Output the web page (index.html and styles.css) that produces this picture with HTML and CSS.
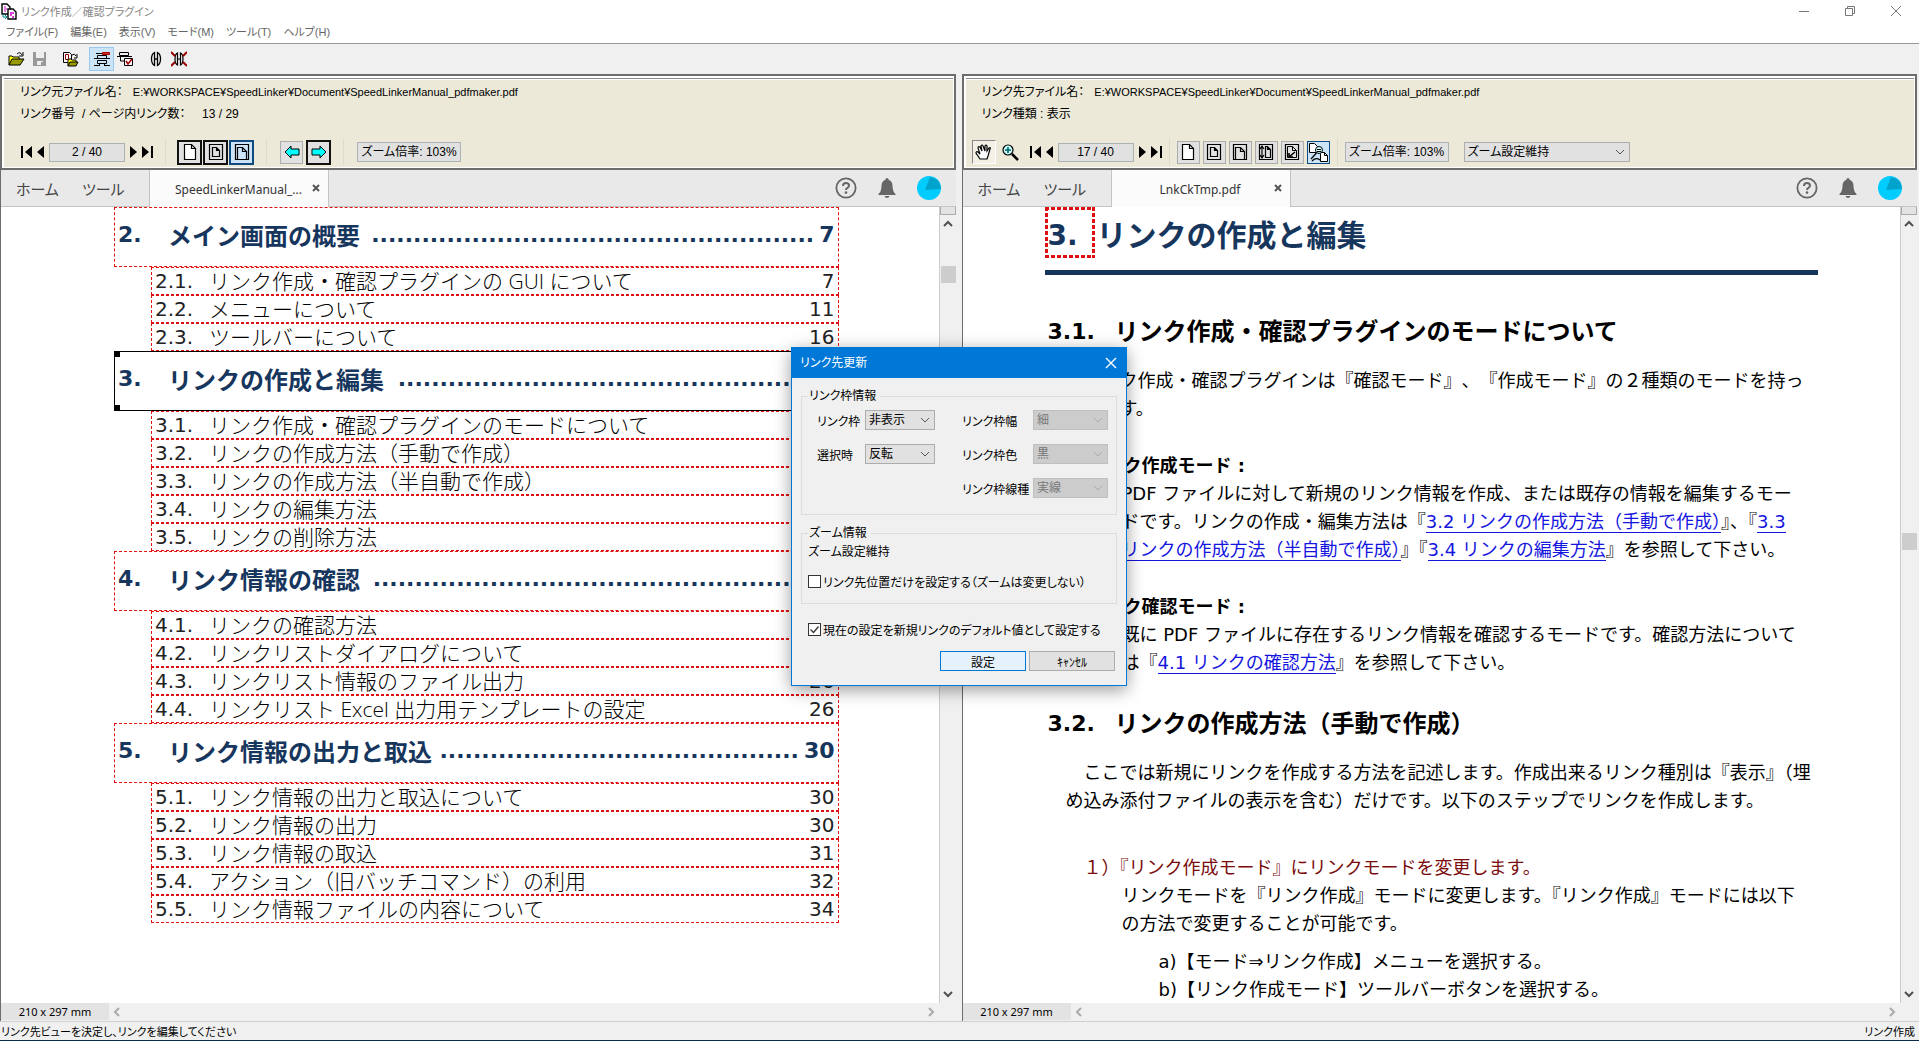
FILE: index.html
```html
<!DOCTYPE html>
<html lang="ja">
<head>
    <meta charset="utf-8">
    <title>リンク作成／確認プラグイン</title>
    <link rel="stylesheet" href="styles.css">
</head>
<body>
    <!-- shared icons -->
    <svg class="defs" width="0" height="0">
        <symbol id="first" viewBox="0 0 12 14"><path d="M0 1h2v12H0zM11 1v12L4 7z"/></symbol>
        <symbol id="prev" viewBox="0 0 8 14"><path d="M7 1v12L0 7z"/></symbol>
        <symbol id="next" viewBox="0 0 8 14"><path d="M1 1v12l7-6z"/></symbol>
        <symbol id="last" viewBox="0 0 12 14"><path d="M10 1h2v12h-2zM1 1v12l7-6z"/></symbol>
        <symbol id="page" viewBox="0 0 16 18"><path d="M2.500 1.500h7l4 4v11h-11z" fill="#fff" stroke="#000" stroke-width="1.200"/><path d="M9.500 1.500v4h4" fill="none" stroke="#000" stroke-width="1.200"/></symbol>
        <symbol id="page-fit" viewBox="0 0 16 18"><path d="M1.500 1.500h13v15h-13z" fill="none" stroke="#000" stroke-width="1.200"/><path d="M4.500 4.500h4l3 3v6h-7zM8.500 4.500v3h3" fill="none" stroke="#000" stroke-width="1.200"/></symbol>
        <symbol id="page-width" viewBox="0 0 16 18"><path d="M1.500 1.500h13v15h-13z" fill="none" stroke="#000" stroke-width="1.200"/><path d="M3.500 16.500v-12h5l4 4v8M8.500 4.500v4h4" fill="none" stroke="#000" stroke-width="1.200"/></symbol>
        <symbol id="page-height" viewBox="0 0 16 18"><path d="M1.500 1.500h13v15h-13z" fill="none" stroke="#000" stroke-width="1.200"/><path d="M7.500 3.500h2l3 3v8h-5zM9.500 3.500v3h3" fill="none" stroke="#000" stroke-width="1.200"/><path d="M4 3v12M2 6l2-3 2 3M2 12l2 3 2-3" fill="none" stroke="#000" stroke-width="1.200"/></symbol>
        <symbol id="page-check" viewBox="0 0 16 18"><path d="M1.500 1.500h13v15h-13z" fill="none" stroke="#000" stroke-width="1.200"/><path d="M3.500 3.500h5l4 4v7h-9zM8.500 3.500v4h4" fill="none" stroke="#000"/><path d="M5 10v4h4M5 14l6-5" fill="none" stroke="#000" stroke-width="1.600"/></symbol>
        <symbol id="help" viewBox="0 0 22 22"><circle cx="11" cy="11" r="9.600" fill="none" stroke="#666" stroke-width="1.800"/><path d="M8 9q0-3 3-3t3 2.600q0 1.500-1.500 2.300Q11 11.700 11 13" fill="none" stroke="#666" stroke-width="2"/><circle cx="11" cy="15.600" r="1.300" fill="#666"/></symbol>
        <symbol id="bell" viewBox="0 0 18 20"><path d="M9 0q1.600 0 1.600 1.700Q14.500 3 14.500 8q0 5 3 8v1H.5v-1q3-3 3-8 0-5 3.900-6.300Q7.400 0 9 0zM6.500 18h5q-.5 2-2.500 2t-2.500-2z" fill="#666"/></symbol>
        <symbol id="avatar" viewBox="0 0 24 24"><circle cx="12" cy="12" r="12" fill="#0cf"/><path d="M8 14L13 1q10 1 11 12z" fill="#00a3cc"/></symbol>
        <symbol id="up" viewBox="0 0 10 8"><path d="M1 6l4-4 4 4" fill="none" stroke="#505050" stroke-width="2"/></symbol>
        <symbol id="down" viewBox="0 0 10 8"><path d="M1 2l4 4 4-4" fill="none" stroke="#505050" stroke-width="2"/></symbol>
    </svg>

    <header class="titlebar">
        <svg width="16" height="17" viewBox="0 0 16 17"><path d="M1 1h5l3 3v7H1z" fill="#fff" stroke="#000" stroke-width="1.400"/><path d="M3 4h2M3 6h3M3 8h2" stroke="#c0c"/><path d="M7 6h5l3 3v7H7z" fill="#fff" stroke="#000" stroke-width="1.400"/><path d="M9 10h4M9 12h2M11 14h2" stroke="#c0c" stroke-width="1.500"/><path d="M2 11v3h3M4 12l2 2-2 2" fill="none" stroke="#088"/></svg>
        <span class="app-name">リンク作成／確認プラグイン</span>
        <button class="win" aria-label="最小化"><svg width="12" height="12"><path d="M1 6.500h10" stroke="#777"/></svg></button>
        <button class="win" aria-label="元に戻す"><svg width="12" height="12" fill="none" stroke="#777"><path d="M1.500 3.500h7v7h-7zM3.500 3V1.500h7v7H9"/></svg></button>
        <button class="win" aria-label="閉じる"><svg width="12" height="12"><path d="M1 1l10 10M11 1L1 11" stroke="#777"/></svg></button>
    </header>
    <nav class="menubar">
        <a href="#">ファイル(F)</a>
        <a href="#">編集(E)</a>
        <a href="#">表示(V)</a>
        <a href="#">モード(M)</a>
        <a href="#">ツール(T)</a>
        <a href="#">ヘルプ(H)</a>
    </nav>
    <div class="toolbar">
        <button class="tool" aria-label="開く"><svg width="17" height="16" viewBox="0 0 17 16"><path d="M1 14V5h3l1 1h6v2" fill="#ff0" stroke="#000"/><path d="M1 14l3-6h12l-4 6z" fill="#990" stroke="#000"/><path d="M9 3q3-3 5 1M15 1v4h-4" fill="none" stroke="#000"/></svg></button>
        <button class="tool" aria-label="保存"><svg width="15" height="16" viewBox="0 0 15 16"><path d="M1 1h13v14H1z" fill="#999"/><path d="M4 1h8v6H4zM5 10h6v4H5z" fill="#eee"/><path d="M9 11h2v3H9z" fill="#999"/></svg></button>
        <button class="tool gap" aria-label="リンク先を開く"><svg width="17" height="16" viewBox="0 0 17 16"><path d="M1.500 1.500h6l2 2v8h-8z" fill="#fff" stroke="#000"/><path d="M3.500 3.500h3v5h-3z" fill="none" stroke="#900"/><path d="M6 15V8h3l1 1h4v2" fill="#ff0" stroke="#000"/><path d="M6 15l2-4h8l-2 4z" fill="#990" stroke="#000"/><path d="M10 4q3-2 4 1M15 3v4h-3" fill="none" stroke="#000"/></svg></button>
        <button class="tool gap on" aria-label="リンク作成モード"><svg width="18" height="16" viewBox="0 0 18 16" fill="none" stroke="#000"><path d="M9.500 1.500h7v2h-7z" fill="#c33" stroke="#a00"/><path d="M3 2.500h6M4.500 7V4.500h9V7M1 7.500h16M4.500 9.500h9v3h-9zM1 14.500h6M11 14.500h6M6.500 12v2.500M11.500 12v2.500"/></svg></button>
        <button class="tool" aria-label="リンク確認モード"><svg width="18" height="16" viewBox="0 0 18 16" fill="none" stroke="#000"><path d="M3.500 1.500h9v3h-9zM1 5.500h15M4.500 6v4H8"/><path d="M8.500 7.500h8v7h-8z" fill="#fff"/><path d="M10 10l2 3 4-5" stroke="#a00" stroke-width="1.600"/></svg></button>
        <button class="tool gap" aria-label="リンク"><svg width="12" height="16" viewBox="0 0 12 16" fill="none" stroke="#000"><path d="M4.500 1.500Q1.500 3 1.500 8t3 6.500zM7.500 1.500q3 1.500 3 6.500t-3 6.500zM4 8h4" stroke-width="1.300"/></svg></button>
        <button class="tool" aria-label="リンク解除"><svg width="16" height="16" viewBox="0 0 16 16" fill="none" stroke="#000"><path d="M6.500 2Q4 3 4 8t2.500 6zM9.500 2Q12 3 12 8t-2.500 6zM6 8h4" stroke-width="1.200"/><path d="M0 1l4 4M16 1l-4 4M0 15l4-4M16 15l-4-4" stroke="#900" stroke-width="2"/></svg></button>
    </div>

    <main class="panes">
        <section class="pane">
            <div class="pane-head">
                <p class="info">リンク元ファイル名：&nbsp; &nbsp;<span class="path">E:¥WORKSPACE¥SpeedLinker¥Document¥SpeedLinkerManual_pdfmaker.pdf</span></p>
                <p class="info">リンク番号&nbsp; / ページ内リンク数：&nbsp; &nbsp; &nbsp;13 / 29</p>
                <div class="controls">
                    <div class="pager">
                        <button aria-label="先頭"><svg width="12" height="14"><use href="#first"/></svg></button>
                        <button aria-label="前"><svg width="8" height="14"><use href="#prev"/></svg></button>
                        <output class="count">2 / 40</output>
                        <button aria-label="次"><svg width="8" height="14"><use href="#next"/></svg></button>
                        <button aria-label="最終"><svg width="12" height="14"><use href="#last"/></svg></button>
                    </div>
                    <div class="group tight">
                        <button class="box dark" aria-label="実寸"><svg width="16" height="18"><use href="#page"/></svg></button>
                        <button class="box dark" aria-label="全体表示"><svg width="16" height="18"><use href="#page-fit"/></svg></button>
                        <button class="box dark on" aria-label="幅に合わせる"><svg width="16" height="18"><use href="#page-width"/></svg></button>
                    </div>
                    <div class="group">
                        <button class="box" aria-label="前のリンク"><svg width="16" height="14" viewBox="0 0 16 14"><path d="M1 7l6-6v3h8v6H7v3z" fill="#0ff" stroke="#000"/></svg></button>
                        <button class="box dark" aria-label="次のリンク"><svg width="16" height="14" viewBox="0 0 16 14"><path d="M15 7L9 1v3H1v6h8v3z" fill="#0ff" stroke="#000"/></svg></button>
                    </div>
                    <div class="group"><output class="zoom">ズーム倍率: 103%</output></div>
                </div>
            </div>
            <div class="tabs">
                <a href="#">ホーム</a>
                <a href="#">ツール</a>
                <div class="tab"><span>SpeedLinkerManual_...</span><button aria-label="タブを閉じる"><svg width="8" height="8"><path d="M1 1l6 6M7 1L1 7" stroke="#555" stroke-width="2"/></svg></button></div>
                <div class="account">
                    <svg width="22" height="22"><use href="#help"/></svg>
                    <svg width="18" height="20"><use href="#bell"/></svg>
                    <svg width="24" height="24"><use href="#avatar"/></svg>
                </div>
            </div>
            <div class="view">
                <div class="page toc">
                    <a href="#" class="chapter"><span class="no">2.</span><span>メイン画面の概要</span><span class="dots">.....................................................</span><span class="pg">7</span></a>
                    <a href="#" class="item"><span class="no">2.1.</span><span>リンク作成・確認プラグインの GUI について</span><span class="pg">7</span></a>
                    <a href="#" class="item"><span class="no">2.2.</span><span>メニューについて</span><span class="pg">11</span></a>
                    <a href="#" class="item"><span class="no">2.3.</span><span>ツールバーについて</span><span class="pg">16</span></a>
                    <a href="#" class="chapter selected"><span class="no">3.</span><span>リンクの作成と編集</span><span class="dots">................................................</span><span class="pg">17</span></a>
                    <a href="#" class="item"><span class="no">3.1.</span><span>リンク作成・確認プラグインのモードについて</span><span class="pg">17</span></a>
                    <a href="#" class="item"><span class="no">3.2.</span><span>リンクの作成方法（手動で作成）</span><span class="pg">17</span></a>
                    <a href="#" class="item"><span class="no">3.3.</span><span>リンクの作成方法（半自動で作成）</span><span class="pg">19</span></a>
                    <a href="#" class="item"><span class="no">3.4.</span><span>リンクの編集方法</span><span class="pg">21</span></a>
                    <a href="#" class="item"><span class="no">3.5.</span><span>リンクの削除方法</span><span class="pg">22</span></a>
                    <a href="#" class="chapter"><span class="no">4.</span><span>リンク情報の確認</span><span class="dots">...................................................</span><span class="pg">23</span></a>
                    <a href="#" class="item"><span class="no">4.1.</span><span>リンクの確認方法</span><span class="pg">23</span></a>
                    <a href="#" class="item"><span class="no">4.2.</span><span>リンクリストダイアログについて</span><span class="pg">24</span></a>
                    <a href="#" class="item"><span class="no">4.3.</span><span>リンクリスト情報のファイル出力</span><span class="pg">26</span></a>
                    <a href="#" class="item"><span class="no">4.4.</span><span>リンクリスト Excel 出力用テンプレートの設定</span><span class="pg">26</span></a>
                    <a href="#" class="chapter"><span class="no">5.</span><span>リンク情報の出力と取込</span><span class="dots">...........................................</span><span class="pg">30</span></a>
                    <a href="#" class="item"><span class="no">5.1.</span><span>リンク情報の出力と取込について</span><span class="pg">30</span></a>
                    <a href="#" class="item"><span class="no">5.2.</span><span>リンク情報の出力</span><span class="pg">30</span></a>
                    <a href="#" class="item"><span class="no">5.3.</span><span>リンク情報の取込</span><span class="pg">31</span></a>
                    <a href="#" class="item"><span class="no">5.4.</span><span>アクション（旧バッチコマンド）の利用</span><span class="pg">32</span></a>
                    <a href="#" class="item"><span class="no">5.5.</span><span>リンク情報ファイルの内容について</span><span class="pg">34</span></a>
                </div>
                <div class="vscroll">
                    <i class="split"></i>
                    <svg width="10" height="8"><use href="#up"/></svg>
                    <div class="track"><i class="thumb" style="top: 5%"></i></div>
                    <svg width="10" height="8"><use href="#down"/></svg>
                </div>
            </div>
            <div class="hscroll">
                <span class="size">210 x 297 mm</span>
                <svg width="8" height="10"><path d="M6 1L2 5l4 4" fill="none" stroke="#aaa" stroke-width="2"/></svg>
                <svg class="end" width="8" height="10"><path d="M2 1l4 4-4 4" fill="none" stroke="#aaa" stroke-width="2"/></svg>
            </div>
        </section>

        <section class="pane">
            <div class="pane-head">
                <p class="info">リンク先ファイル名：&nbsp; &nbsp;<span class="path">E:¥WORKSPACE¥SpeedLinker¥Document¥SpeedLinkerManual_pdfmaker.pdf</span></p>
                <p class="info">リンク種類 : 表示</p>
                <div class="controls wide">
                    <div class="hand-tools">
                        <button class="sunken" aria-label="手のひら"><svg width="18" height="18" viewBox="0 0 18 18"><path d="M5 16L1 10q0-2 2-1l2 2L3 5q0-2 2-1l2 4-1-5q1-2 2 0l2 5V3q1-2 2 0v5l2-3q2-1 1 1l-2 7-1 3z" fill="#fff" stroke="#000" stroke-width="1.200"/></svg></button>
                        <button aria-label="ズーム"><svg width="18" height="18" viewBox="0 0 18 18"><path d="M11 11l6 6" stroke="#000" stroke-width="2.500"/><circle cx="7" cy="7" r="5" fill="#cff" stroke="#000" stroke-width="1.200"/><path d="M7 4v6M4 7h6" stroke="#066" stroke-width="1.600"/></svg></button>
                    </div>
                    <div class="pager">
                        <button aria-label="先頭"><svg width="12" height="14"><use href="#first"/></svg></button>
                        <button aria-label="前"><svg width="8" height="14"><use href="#prev"/></svg></button>
                        <output class="count">17 / 40</output>
                        <button aria-label="次"><svg width="8" height="14"><use href="#next"/></svg></button>
                        <button aria-label="最終"><svg width="12" height="14"><use href="#last"/></svg></button>
                    </div>
                    <div class="group near">
                        <button class="box" aria-label="実寸"><svg width="16" height="18"><use href="#page"/></svg></button>
                        <button class="box" aria-label="全体表示"><svg width="16" height="18"><use href="#page-fit"/></svg></button>
                        <button class="box" aria-label="幅に合わせる"><svg width="16" height="18"><use href="#page-width"/></svg></button>
                        <button class="box" aria-label="高さに合わせる"><svg width="16" height="18"><use href="#page-height"/></svg></button>
                        <button class="box" aria-label="描画領域"><svg width="16" height="18"><use href="#page-check"/></svg></button>
                        <button class="box on" aria-label="ズーム設定維持"><svg width="21" height="21" viewBox="0 0 21 21"><path d="M1.500 1.500h5l3 3v6h-8zM12.500 10.500h4l3 3v6h-7zM16.500 10.500v3h3" fill="#fff" stroke="#000"/><circle cx="11" cy="8" r="3.500" fill="#cff" stroke="#000"/><path d="M9 7.500h4M9 9.500h4M8.500 11L3 17M4 19q4-4 8-1" fill="none" stroke="#000" stroke-width="1.200"/></svg></button>
                    </div>
                    <div class="group near">
                        <output class="zoom">ズーム倍率: 103%</output>
                        <select class="keep" aria-label="ズーム設定"><option>ズーム設定維持</option></select>
                    </div>
                </div>
            </div>
            <div class="tabs">
                <a href="#">ホーム</a>
                <a href="#">ツール</a>
                <div class="tab"><span>LnkCkTmp.pdf</span><button aria-label="タブを閉じる"><svg width="8" height="8"><path d="M1 1l6 6M7 1L1 7" stroke="#555" stroke-width="2"/></svg></button></div>
                <div class="account">
                    <svg width="22" height="22"><use href="#help"/></svg>
                    <svg width="18" height="20"><use href="#bell"/></svg>
                    <svg width="24" height="24"><use href="#avatar"/></svg>
                </div>
            </div>
            <div class="view">
                <article class="page doc">
                    <h1><span class="mark">3.</span>リンクの作成と編集</h1>
                    <h2><span class="no">3.1.</span>リンク作成・確認プラグインのモードについて</h2>
                    <p class="intro spaced">　リンク作成・確認プラグインは『確認モード』、『作成モード』の２種類のモードを持っ<br>ています。</p>
                    <dl>
                        <dt>リンク作成モード :</dt>
                        <dd>PDF ファイルに対して新規のリンク情報を作成、または既存の情報を編集するモー<br>ドです。リンクの作成・編集方法は『<a href="#">3.2 リンクの作成方法（手動で作成）</a>』、『<a href="#">3.3<br>リンクの作成方法（半自動で作成）</a>』『<a href="#">3.4 リンクの編集方法</a>』を参照して下さい。</dd>
                        <dt>リンク確認モード :</dt>
                        <dd>既に PDF ファイルに存在するリンク情報を確認するモードです。確認方法について<br>は『<a href="#">4.1 リンクの確認方法</a>』を参照して下さい。</dd>
                    </dl>
                    <h2><span class="no">3.2.</span>リンクの作成方法（手動で作成）</h2>
                    <p class="intro">　ここでは新規にリンクを作成する方法を記述します。作成出来るリンク種別は『表示』（埋<br>め込み添付ファイルの表示を含む）だけです。以下のステップでリンクを作成します。</p>
                    <p class="step">１）『リンク作成モード』にリンクモードを変更します。</p>
                    <p class="detail">リンクモードを『リンク作成』モードに変更します。『リンク作成』モードには以下<br>の方法で変更することが可能です。</p>
                    <p class="choice">a)【モード⇒リンク作成】メニューを選択する。<br>b)【リンク作成モード】ツールバーボタンを選択する。</p>
                </article>
                <div class="vscroll">
                    <i class="split"></i>
                    <svg width="10" height="8"><use href="#up"/></svg>
                    <div class="track"><i class="thumb" style="top: 40%"></i></div>
                    <svg width="10" height="8"><use href="#down"/></svg>
                </div>
            </div>
            <div class="hscroll">
                <span class="size">210 x 297 mm</span>
                <svg width="8" height="10"><path d="M6 1L2 5l4 4" fill="none" stroke="#aaa" stroke-width="2"/></svg>
                <svg class="end" width="8" height="10"><path d="M2 1l4 4-4 4" fill="none" stroke="#aaa" stroke-width="2"/></svg>
            </div>
        </section>
    </main>

    <footer class="status"><span>リンク先ビューを決定し、リンクを編集してください</span><span>リンク作成</span></footer>

    <form class="dialog" role="dialog" aria-labelledby="dlg-title">
        <div class="dlg-head">
            <span id="dlg-title">リンク先更新</span>
            <button type="button" aria-label="閉じる"><svg width="12" height="12"><path d="M1 1l10 10M11 1L1 11" stroke="#fff" stroke-width="1.400"/></svg></button>
        </div>
        <div class="dlg-body">
            <fieldset class="frame">
                <legend>リンク枠情報</legend>
                <label for="border">リンク枠</label>
                <select id="border"><option>非表示</option></select>
                <label for="width" class="col3">リンク枠幅</label>
                <select id="width" disabled><option>細</option></select>
                <label for="select">選択時</label>
                <select id="select"><option>反転</option></select>
                <label for="color" class="col3">リンク枠色</label>
                <select id="color" disabled><option>黒</option></select>
                <label for="line" class="col3">リンク枠線種</label>
                <select id="line" disabled><option>実線</option></select>
            </fieldset>
            <fieldset class="zooming">
                <legend>ズーム情報</legend>
                <p>ズーム設定維持</p>
                <label><input type="checkbox">リンク先位置だけを設定する（ズームは変更しない）</label>
            </fieldset>
            <label class="default"><input type="checkbox" checked>現在の設定を新規リンクのデフォルト値として設定する</label>
            <div class="buttons">
                <button type="button" class="primary">設定</button>
                <button type="button">ｷｬﾝｾﾙ</button>
            </div>
        </div>
    </form>
</body>
</html>
```

FILE: styles.css
```css
* {
    box-sizing: border-box;
}

body {
    margin: 0;
    height: 100vh;
    display: flex;
    flex-direction: column;
    overflow: hidden;
    background: #f0f0f0;
    color: #000;
    font-family: "Liberation Sans", "Noto Sans CJK JP", sans-serif;
    font-size: 12px;
    font-feature-settings: "palt";
    white-space: nowrap;
}

p, h1, h2, dl, dd {
    margin: 0;
}

button, select, input {
    font: inherit;
    margin: 0;
}

button {
    display: flex;
    align-items: center;
    justify-content: center;
    padding: 0;
    border: none;
    background: none;
}

a {
    color: inherit;
    text-decoration: none;
}

svg {
    flex: none;
}

.defs {
    position: absolute;
}

/* window frame */
.titlebar {
    display: flex;
    align-items: center;
    height: 22px;
    padding-left: 1px;
    background: #fff;
    color: #888;
    font-size: 11px;
}

.app-name {
    flex: 1;
    padding-left: 4px;
}

.win {
    width: 46px;
    height: 22px;
}

.menubar {
    display: flex;
    gap: 12px;
    height: 22px;
    padding-left: 6px;
    line-height: 21px;
    background: #fff;
    border-bottom: 1px solid #999;
    color: #666;
    font-size: 11px;
}

.toolbar {
    display: flex;
    align-items: center;
    height: 30px;
    padding-left: 5px;
}

.tool {
    width: 23px;
    height: 22px;
}

.tool.gap {
    margin-left: 8px;
}

.tool.on {
    background: #cce4f7;
    outline: 1px solid #99c9ef;
}

/* viewers */
.panes {
    flex: 1;
    min-height: 0;
    display: grid;
    grid-template-columns: 1fr 1fr;
    gap: 6px;
    padding-right: 2px;
}

.pane {
    display: flex;
    flex-direction: column;
    min-width: 0;
    min-height: 0;
    border-left: 1px solid #6d6d6d;
}

.pane-head {
    height: 96px;
    padding: 3px 15px 0 18px;
    border: 2px solid #6d6d6d;
    border-left-width: 1px;
    background: linear-gradient(#fff 2px, #888 2px, #888 3px, #fff 3px, #fff 4px, #ece9d8 4px);
    box-shadow: inset -1px -1px 0 #fff, inset 2px 0 0 #fff;
}

.info {
    line-height: 22px;
    padding-top: 2px;
}

.info + .info {
    padding-top: 0;
}

.path {
    font-size: 11px;
}

.controls {
    display: flex;
    align-items: center;
    height: 26px;
    margin: 14px 0 0 -1px;
}

.controls.wide {
    margin-left: -10px;
}

.hand-tools {
    display: flex;
    gap: 4px;
    margin-right: 8px;
}

.hand-tools button {
    width: 20px;
    height: 24px;
}

.hand-tools .sunken {
    width: 24px;
    border: 1px solid #888;
    border-right-color: #fff;
    border-bottom-color: #fff;
    background: #f3f1e6;
}

.pager {
    display: flex;
    align-items: center;
    gap: 4px;
    padding-left: 2px;
}

.count, .zoom {
    border: 1px solid #adb2b5;
    background: #e1e1e1;
    text-align: center;
}

.count {
    width: 76px;
    line-height: 17px;
}

.zoom {
    width: 104px;
    height: 20px;
    line-height: 18px;
}

.group {
    display: flex;
    align-items: center;
    gap: 3px;
    margin-left: 12px;
    padding-left: 13px;
    height: 26px;
    border-left: 1px solid #dedbc9;
}

.group.tight {
    gap: 1px;
    padding-left: 11px;
}

.group.near {
    margin-left: 7px;
    padding-left: 7px;
}

.box {
    width: 23px;
    height: 23px;
    border: 1px solid #adadad;
    background: #e1e1e1;
}

.box.dark {
    width: 25px;
    height: 25px;
    border: 2px solid #111;
}

.box.on {
    border-color: #0f4a80;
    background: #cce4f7;
}

select {
    appearance: none;
    height: 20px;
    padding: 0 16px 0 3px;
    border: 1px solid #adadad;
    border-radius: 0;
    color: #000;
    background: #e1e1e1 url("data:image/svg+xml,%3Csvg xmlns='http://www.w3.org/2000/svg' width='10' height='6'%3E%3Cpath d='M1 1l4 4 4-4' fill='none' stroke='%23555'/%3E%3C/svg%3E") no-repeat right 4px center;
}

select:disabled {
    color: #777;
    opacity: 1;
    background-color: #ccc;
    background-image: url("data:image/svg+xml,%3Csvg xmlns='http://www.w3.org/2000/svg' width='10' height='6'%3E%3Cpath d='M1 1l4 4 4-4' fill='none' stroke='%23aaa'/%3E%3C/svg%3E");
    border-color: #bfbfbf;
}

.keep {
    width: 166px;
    margin-left: 12px;
}

.tabs {
    display: flex;
    align-items: center;
    height: 37px;
    background: #e9e9e9;
    border-bottom: 1px solid #c4c4c4;
    font-size: 15px;
    color: #444;
}

.tabs a {
    width: 66px;
    padding-left: 15px;
}

.tabs a + a {
    width: 82px;
}

.tab {
    display: flex;
    align-items: center;
    width: 180px;
    height: 37px;
    padding-right: 8px;
    background: #fbfbfb;
    border: solid #c4c4c4;
    border-width: 0 1px;
    font-family: "Noto Sans", sans-serif;
    font-size: 12px;
    color: #333;
}

.tab span {
    flex: 1;
    padding: 3px 0 0 15px;
    text-align: center;
}

.tab button {
    width: 8px;
}

.account {
    display: flex;
    align-items: center;
    gap: 21px;
    margin-left: auto;
    padding-right: 15px;
}

.view {
    flex: 1;
    display: flex;
    min-height: 0;
    background: #fff;
}

.page {
    flex: 1;
    min-width: 0;
    overflow: hidden;
    font-family: "DejaVu Sans", "Noto Sans CJK JP", sans-serif;
    font-feature-settings: normal;
}

.vscroll {
    display: flex;
    flex-direction: column;
    align-items: center;
    width: 17px;
    padding-bottom: 5px;
    background: #f0f0f0;
    border-left: 1px solid #ccc;
}

.split {
    width: 16px;
    height: 8px;
    margin-bottom: 5px;
    background: #e3e3e3;
    border: 1px solid #aaa;
    border-top: none;
}

.track {
    position: relative;
    flex: 1;
    align-self: stretch;
}

.thumb {
    position: absolute;
    left: 1px;
    right: 0;
    height: 17px;
    background: #cdcdcd;
}

.hscroll {
    display: flex;
    align-items: center;
    height: 17px;
    margin-bottom: 1px;
}

.size {
    width: 108px;
    margin-right: 4px;
    line-height: 17px;
    background: #e3e3e3;
    text-align: center;
    font-family: "Noto Sans", sans-serif;
    font-size: 11px;
}

.hscroll .end {
    margin: 0 21px 0 auto;
}

.status {
    display: flex;
    justify-content: space-between;
    height: 20px;
    padding: 0 4px 0 1px;
    line-height: 20px;
    border-top: 1px solid #d0d0d0;
    border-bottom: 1px solid #0a2a4a;
    font-size: 11px;
}

/* table of contents */
.toc {
    display: flex;
    flex-direction: column;
    padding: 0 100px 0 113px;
    font-size: 20px;
}

.chapter, .item {
    display: flex;
    align-items: center;
    border: 1px dashed #e01010;
    padding: 0 3px;
}

.chapter {
    height: 60px;
    flex: none;
    padding-bottom: 5px;
    font-size: 24px;
    font-weight: bold;
    color: #17365d;
}

.item {
    height: 28px;
    flex: none;
    margin-left: 37px;
    line-height: 26px;
    font-family: "Open Sans", "Noto Sans CJK JP", sans-serif;
    font-size: 21px;
    font-weight: 300;
}

.no, .pg {
    font-family: "DejaVu Sans", sans-serif;
}

.chapter .no {
    width: 50px;
    font-size: 22px;
}

.item .no {
    width: 54px;
    font-size: 20px;
    font-weight: 400;
    color: #222;
}

.pg {
    margin-left: auto;
    font-size: 20px;
    font-weight: 400;
    color: #222;
}

.dots {
    flex: 1;
    width: 0;
    margin: 0 5px 0 2px;
    text-align: right;
    font-size: 22px;
}

.chapter .pg {
    font-size: 22px;
    font-weight: bold;
    color: inherit;
}

/* the link being edited has square handles */
.chapter.selected {
    border: 1px solid #000;
    background:
        linear-gradient(#000, #000) 0 0 / 5px 5px no-repeat,
        linear-gradient(#000, #000) 0 100% / 5px 5px no-repeat;
}

/* manual page */
.doc {
    padding: 0 82px;
    font-size: 18px;
    line-height: 28px;
}

.doc h1 {
    display: flex;
    height: 68px;
    border-bottom: 5px solid #17365d;
    font-size: 30px;
    line-height: 58px;
    color: #17365d;
}

.mark {
    width: 50px;
    height: 51px;
    margin-right: 2px;
    padding-left: 3px;
    line-height: 58px;
    font-size: 28px;
    background:
        repeating-linear-gradient(90deg, #e01010 0 4px, transparent 4px 6px) 0 0 / 100% 3px no-repeat,
        repeating-linear-gradient(90deg, #e01010 0 4px, transparent 4px 6px) 0 100% / 100% 3px no-repeat,
        repeating-linear-gradient(#e01010 0 4px, transparent 4px 6px) 0 0 / 3px 100% no-repeat,
        repeating-linear-gradient(#e01010 0 4px, transparent 4px 6px) 100% 0 / 3px 100% no-repeat;
}

.doc h2 {
    display: flex;
    margin: 43px 0 21px 3px;
    font-size: 24px;
}

.doc h2 .no {
    width: 67px;
    font-size: 22px;
}

.intro {
    margin-left: 21px;
}

.spaced {
    text-spacing-trim: space-all;
}

.doc dt {
    margin: 29px 0 0 43px;
    font-weight: bold;
}

.doc dd {
    margin-left: 77px;
}

.doc dl a {
    color: #1515e0;
    border-bottom: 1px solid #1515e0;
}

.doc dl + h2 {
    margin: 33px 0 21px 3px;
}

.step {
    margin: 39px 0 0 39px;
    color: #7a0c0c;
}

.detail {
    margin-left: 77px;
}

.choice {
    margin: 10px 0 0 114px;
}

/* link update dialog, floats over both viewers */
.dialog {
    position: absolute;
    left: 791px;
    top: 347px;
    width: 336px;
    border: 1px solid #0078d7;
    background: #f0f0f0;
    box-shadow: 0 4px 16px rgba(0, 0, 0, 0.4);
}

.dlg-head {
    display: flex;
    justify-content: space-between;
    height: 30px;
    padding: 0 9px 0 8px;
    line-height: 30px;
    background: #0078d7;
    color: #fff;
}

.dlg-body {
    padding: 10px 9px 14px;
}

fieldset {
    margin: 0;
    border: 1px solid #dcdcdc;
}

legend {
    padding: 0 4px 0 1px;
    line-height: 16px;
}

.frame {
    display: grid;
    grid-template-columns: 48px 70px 98px 75px;
    justify-content: end;
    align-content: start;
    align-items: center;
    row-gap: 14px;
    height: 127px;
    padding: 6px 8px 0 6px;
}

.frame .col3 {
    grid-column: 3;
    padding-left: 27px;
}

.zooming {
    height: 79px;
    margin-top: 10px;
    padding: 2px 6px 0;
}

.zooming p {
    line-height: 18px;
    margin-bottom: 11px;
}

.zooming label, .default {
    display: flex;
    align-items: center;
    gap: 2px;
    height: 18px;
}

.default {
    margin: 16px 0 0 7px;
}

input[type="checkbox"] {
    appearance: none;
    flex: none;
    width: 13px;
    height: 13px;
    border: 1px solid #333;
    background: #fff;
}

input[type="checkbox"]:checked {
    background: #fff url("data:image/svg+xml,%3Csvg xmlns='http://www.w3.org/2000/svg' width='11' height='11'%3E%3Cpath d='M1.500 5.500l3 3 5-6' fill='none' stroke='%23333' stroke-width='1.300'/%3E%3C/svg%3E") no-repeat center;
}

.buttons {
    display: flex;
    justify-content: flex-end;
    gap: 3px;
    margin: 13px 2px 0 0;
}

.buttons button {
    width: 86px;
    height: 20px;
    border: 1px solid #adadad;
    background: #e1e1e1;
}

.buttons .primary {
    border-color: #0078d7;
    background: #e5f1fb;
}
```
